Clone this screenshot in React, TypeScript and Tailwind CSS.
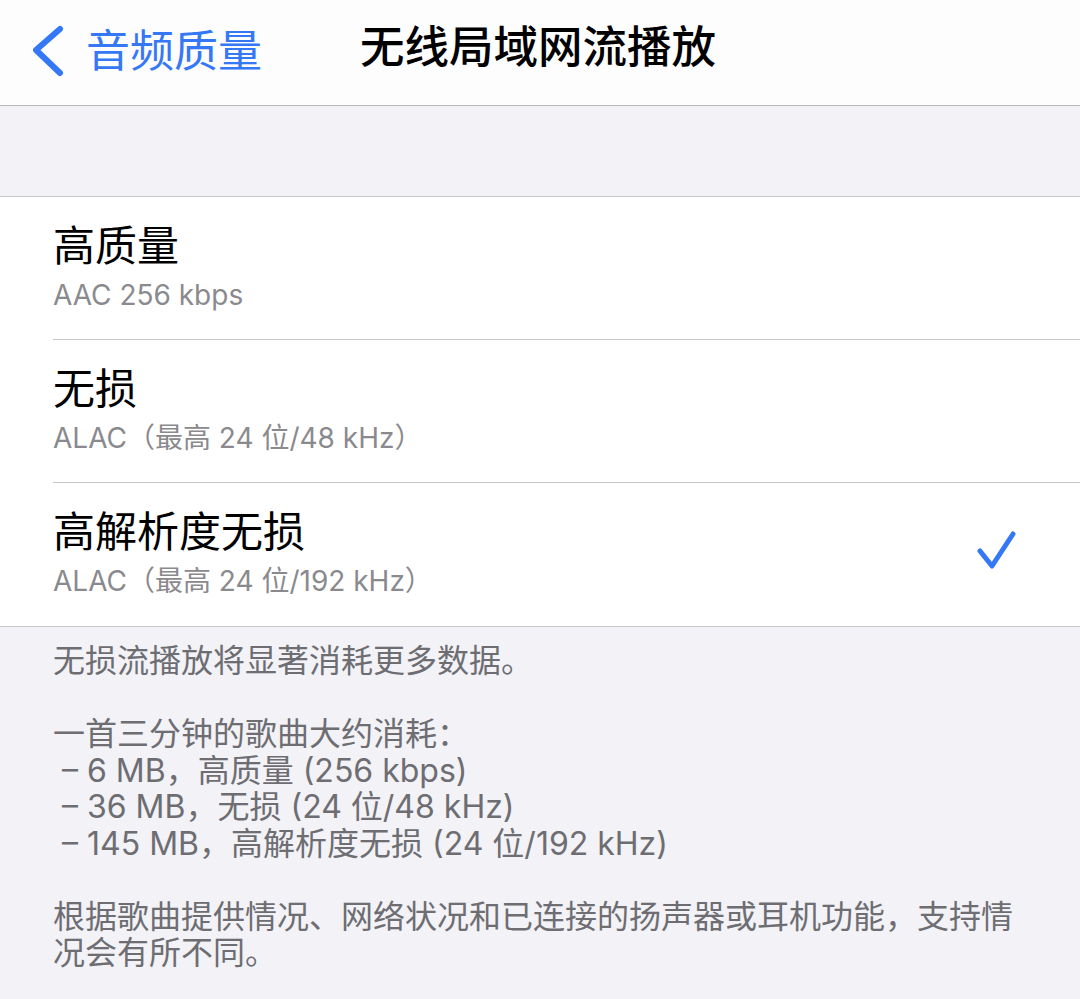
import React from "react";

const font = { fontFamily: '"Inter", "Noto Sans CJK SC", sans-serif' };

function Row({ title, sub, checked, last }: { title: string; sub: string; checked?: boolean; last?: boolean }) {
  return (
    <div className="flex h-[143px] pl-[53px]">
      <div className={`flex flex-1 items-start ${last ? "" : "border-b border-[#c8c7cc]"} pr-[62px]`}>
        <div className="flex-1 pt-[24px]">
          <div className="text-[42px] leading-[50px] text-black">{title}</div>
          <div className="text-[28px] leading-[48px] text-[#8a8a8e]">{sub}</div>
        </div>
        {checked && (
          <div className="self-center">
            <svg width="44" height="44" viewBox="0 0 44 44" className="mt-[-4px]">
              <path d="M6 20 L18 35 L39 3" fill="none" stroke="#3478f6" strokeWidth="5" strokeLinecap="round" strokeLinejoin="round" />
            </svg>
          </div>
        )}
      </div>
    </div>
  );
}

export default function App() {
  return (
    <div className="w-[1080px] h-[999px] bg-[#f2f2f7] overflow-hidden" style={font}>
      <div className="relative h-[106px] bg-[#fdfdfe] border-b border-[#b9b9bc] flex items-center">
        <div className="flex items-center pl-[33px] h-full pb-[4px]">
          <svg width="34" height="52" viewBox="0 0 34 52">
            <path d="M27 4 L3 25 L27 48" fill="none" stroke="#3478f6" strokeWidth="6" strokeLinecap="round" strokeLinejoin="round" />
          </svg>
          <span className="ml-[19px] text-[44px] leading-[50px] text-[#3478f6]">音频质量</span>
        </div>
        <div className="absolute left-[360px] top-[22px] text-[44.5px] leading-[50px] font-medium text-black">无线局域网流播放</div>
      </div>
      <div className="h-[90px]" />
      <div className="bg-white border-t border-b border-[#c8c7cc]">
        <Row title="高质量" sub="AAC 256 kbps" />
        <Row title="无损" sub="ALAC（最高 24 位/48 kHz）" />
        <Row title="高解析度无损" sub="ALAC（最高 24 位/192 kHz）" checked last />
      </div>
      <div className="pl-[53px] pr-[20px] pt-[16px] text-[32px] leading-[36.5px] text-[#6d6d72] whitespace-pre-wrap">
        <div>无损流播放将显著消耗更多数据。</div>
        <div>&nbsp;</div>
        <div>一首三分钟的歌曲大约消耗：</div>
        <div> – 6 MB，高质量 (256 kbps)</div>
        <div> – 36 MB，无损 (24 位/48 kHz)</div>
        <div> – 145 MB，高解析度无损 (24 位/192 kHz)</div>
        <div>&nbsp;</div>
        <div>根据歌曲提供情况、网络状况和已连接的扬声器或耳机功能，支持情</div>
        <div>况会有所不同。</div>
      </div>
    </div>
  );
}
